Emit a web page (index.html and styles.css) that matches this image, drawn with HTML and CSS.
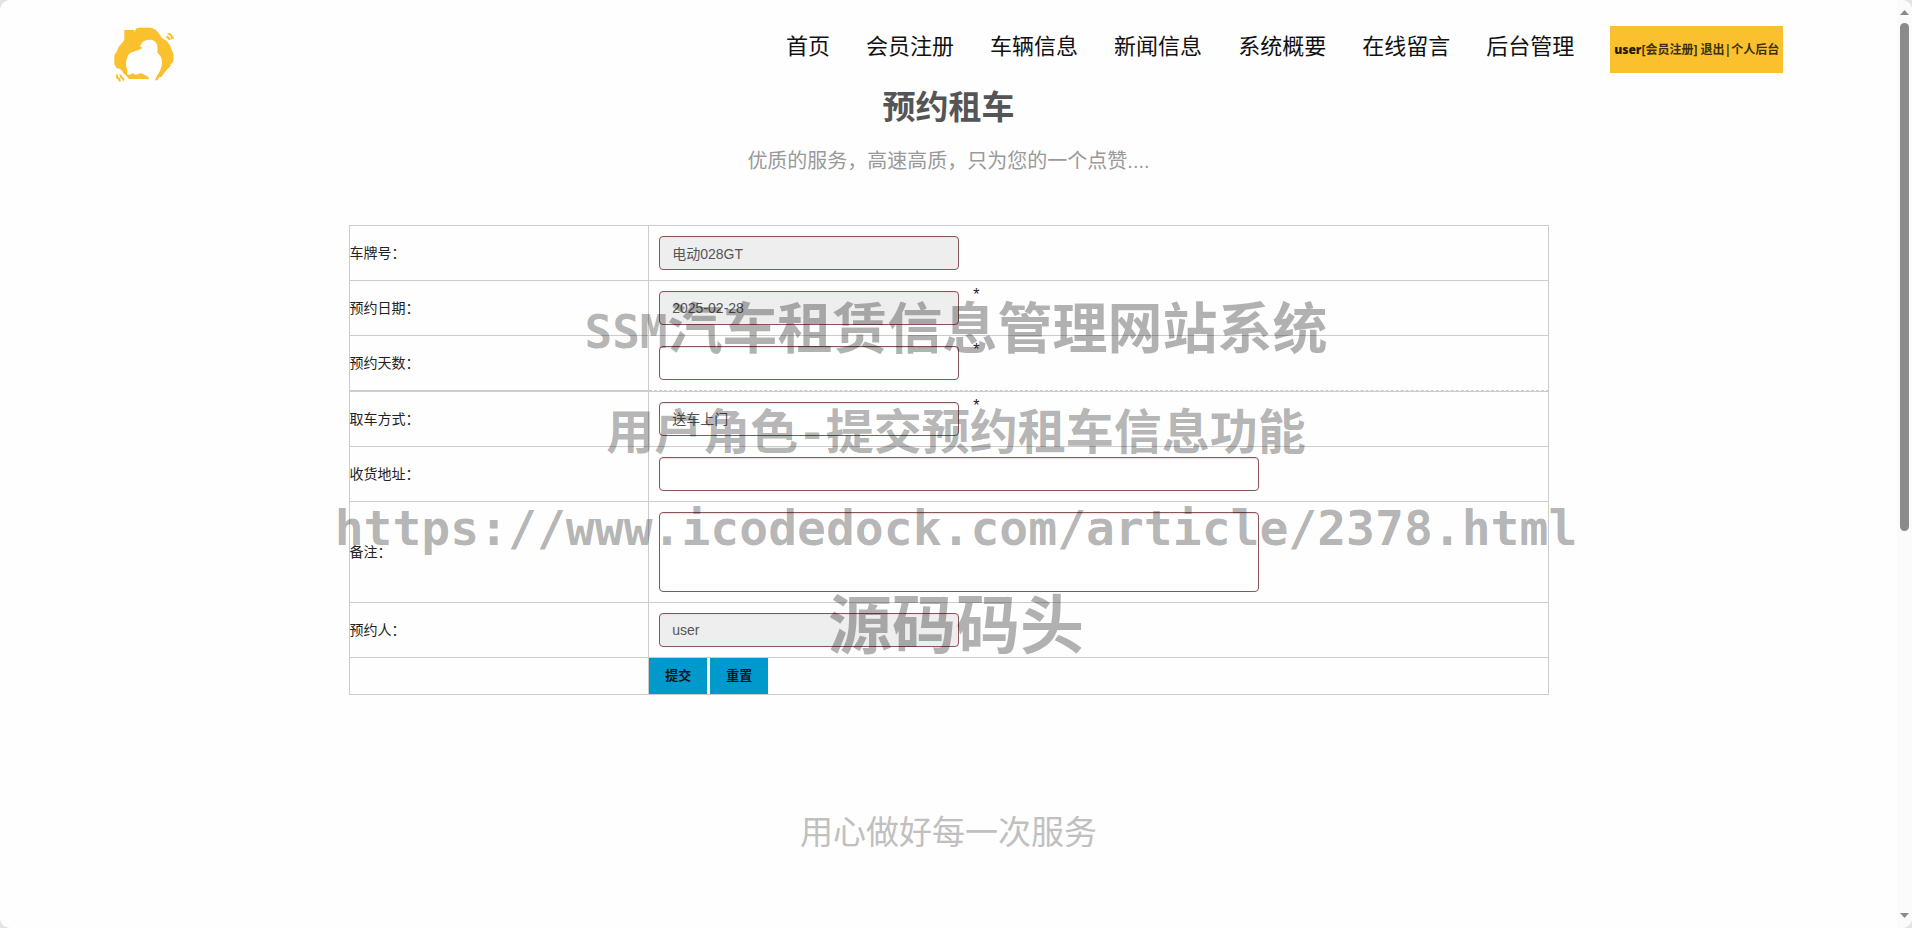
FILE: index.html
```html
<!DOCTYPE html>
<html lang="zh-CN">
<head>
<meta charset="utf-8">
<title>预约租车</title>
<link rel="stylesheet" href="styles.css">
</head>
<body>
<div class="window">
  <div class="page">
    <header class="header">
      <a class="logo" href="#" aria-label="首页">
        <svg width="60" height="56" viewBox="71 51 180 168" fill="#fbc02d">
          <path d="M102 60h30v6l7-11q10-3 21-2 16-1 27 2 10 3 18 15l10 14 15 10q10 10 13 23l6 14v23l-8 9-9 6q-3 9-11 13l-10 14-10 15h-8l7-14q11-14 14-29 3-19-4-31l-9-9q2-15-1-25-6-14-21-14-17 0-24 9-3 8-7 11l7 3-2 4q-9 5-24 9-17 5-18 17l-4 13q-1 14 5 30l-2 7q4 4 12 1l6-4q4 7 14 4 12-7 22 3 10 2 13 11h-61l-11-12q-8-6-10-13-5-7-16-7l-7-12v-27l6-9q5-17 17-28 7-6 7-12z"/>
          <path d="M200 201l9-14q11-14 12-30l22 9-17 17-13 18z"/>
          <g fill="none" stroke="#fbc02d" stroke-width="6">
            <path d="M232 71q12 1 13 13l5-1M228 80q9 2 10 10M80 194q-2 10 6 12l3 8M90 194q1 8 8 12l2 6"/>
          </g>
        </svg>
      </a>
      <nav class="nav">
        <a href="#">首页</a>
        <a href="#">会员注册</a>
        <a href="#">车辆信息</a>
        <a href="#">新闻信息</a>
        <a href="#">系统概要</a>
        <a href="#">在线留言</a>
        <a href="#">后台管理</a>
        <div class="account"><b>user</b>[会员注册] <a href="#">退出</a>|<a href="#">个人后台</a></div>
      </nav>
    </header>

    <main class="main">
      <h1 class="title">预约租车</h1>
      <p class="subtitle">优质的服务，高速高质，只为您的一个点赞....</p>

      <form class="booking">
        <table class="grid">
          <tr>
            <td><label for="plate">车牌号：</label></td>
            <td><div class="field"><input class="control" id="plate" type="text" value="电动028GT" readonly></div></td>
          </tr>
          <tr>
            <td><label for="date">预约日期：</label></td>
            <td><div class="field"><input class="control" id="date" type="text" value="2025-02-28" readonly><span class="required">*</span></div></td>
          </tr>
          <tr class="dashed">
            <td><label for="days">预约天数：</label></td>
            <td><div class="field"><input class="control" id="days" type="text"><span class="required">*</span></div></td>
          </tr>
          <tr class="ruled">
            <td><label for="pickup">取车方式：</label></td>
            <td><div class="field"><select class="control" id="pickup"><option>送车上门</option></select><span class="required">*</span></div></td>
          </tr>
          <tr>
            <td><label for="address">收货地址：</label></td>
            <td><div class="field"><input class="control wide" id="address" type="text"></div></td>
          </tr>
          <tr>
            <td><label for="remark">备注：</label></td>
            <td><div class="field"><textarea class="control wide tall" id="remark"></textarea></div></td>
          </tr>
          <tr>
            <td><label for="booker">预约人：</label></td>
            <td><div class="field"><input class="control" id="booker" type="text" value="user" readonly></div></td>
          </tr>
          <tr>
            <td></td>
            <td class="actions"><div class="buttons"><button class="button" type="submit">提交</button><button class="button" type="reset">重置</button></div></td>
          </tr>
        </table>
      </form>
    </main>

    <footer class="slogan">用心做好每一次服务</footer>
  </div>

  <div class="scrollbar" aria-hidden="true">
    <svg width="9" height="5" viewBox="0 0 9 5"><path d="M4.500 0L9 5H0z"/></svg>
    <div class="thumb"></div>
    <svg width="9" height="5" viewBox="0 0 9 5"><path d="M0 0h9L4.500 5z"/></svg>
  </div>

  <div class="watermark">
    <div class="mark first"><span>SSM</span>汽车租赁信息管理网站系统</div>
    <div class="mark">用户角色<span>-</span>提交预约租车信息功能</div>
    <div class="mark url">https://www.icodedock.com/article/2378.html</div>
    <div class="mark last">源码码头</div>
  </div>
</div>
</body>
</html>
```

FILE: styles.css
```css
* { box-sizing: border-box; }

body {
  margin: 0;
  background: #e4e4e4;
  color: #222;
  font: 14px/20px "Liberation Sans", "Noto Sans CJK SC", sans-serif;
}

a { color: inherit; text-decoration: none; }

.window {
  position: relative;
  display: flex;
  height: 100vh;
  overflow: hidden;
  border-radius: 10px;
  background: #fefefe;
}

.page { flex: 1; }

.header {
  display: flex;
  justify-content: space-between;
  padding: 26px 6% 0;
}

.logo svg { display: block; margin-top: 1px; }

.nav {
  display: flex;
  align-items: flex-start;
  gap: 36px;
  color: #111;
  font-size: 22px;
  line-height: 42px;
}

.account {
  padding: 1px 4px 0;
  background: #fbc02d;
  color: #3a3013;
  font: bold 12px/46px "Open Sans", "Noto Sans CJK SC", sans-serif;
  white-space: nowrap;
}

.account b { color: #221c0b; }

.main { text-align: center; }

.title {
  margin: 0;
  color: #555;
  font-size: 33px;
  line-height: 50px;
}

.subtitle {
  margin: 14px 0 50px;
  color: #999;
  font-size: 20px;
  line-height: 28px;
}

.booking {
  width: 1200px;
  max-width: 100%;
  margin: 0 auto;
}

.grid {
  width: 100%;
  border: solid #ccc;
  border-width: 1px 0 0 1px;
  border-spacing: 0;
  text-align: left;
}

.grid td {
  padding: 10px;
  border: solid #ccc;
  border-width: 0 1px 1px 0;
}

.grid td:first-child { width: 25%; padding-left: 0; }
.grid .dashed td:last-child { border-bottom-style: dashed; }
.grid .ruled td { border-top-width: 1px; }
.grid .actions { padding: 0; }

.field { display: flex; align-items: flex-start; gap: 14px; }

.control {
  display: block;
  width: 300px;
  height: 34px;
  margin: 0;
  padding: 6px 12px;
  border: 1px solid #8a5558;
  border-radius: 4px;
  background: #fff;
  box-shadow: inset 0 1px 1px #f0dede;
  color: #555;
  font: inherit;
  appearance: none;
  resize: none;
}

.control[readonly] { background: #eee; }
.wide { width: 600px; }
.tall { height: 80px; }

.required { font-size: 16px; line-height: 8px; }

.buttons { display: flex; gap: 3px; }

.button {
  height: 36px;
  padding: 0 16px;
  border: 0;
  background: #09c;
  color: #111;
  font: bold 13px/36px "Liberation Sans", "Noto Sans CJK SC", sans-serif;
}

.slogan {
  margin-top: 114px;
  color: #c0c0c0;
  font-size: 33px;
  line-height: 48px;
  text-align: center;
}

.scrollbar {
  display: flex;
  flex-direction: column;
  align-items: center;
  width: 15px;
  padding: 10px 0 10px;
  background: #fbfbfb;
  fill: #8b8b8b;
}

.thumb {
  width: 9px;
  height: 56%;
  margin: 8px 0 auto;
  border-radius: 5px;
  background: #8b8b8b;
}

.watermark {
  position: absolute;
  top: 284px;
  left: 0;
  right: 0;
  color: rgba(0, 0, 0, 0.3);
  font-weight: bold;
  text-align: center;
  pointer-events: none;
}

.mark {
  height: 80px;
  font-family: "Noto Sans CJK SC", sans-serif;
  font-size: 48px;
  line-height: 80px;
  margin-bottom: 20px;
  white-space: nowrap;
}

.mark span, .url { font-family: "DejaVu Sans Mono", monospace; }
.mark span { font-size: 46px; line-height: 1; }
.url { margin-bottom: 12px; }
.first { font-size: 55px; margin-bottom: 24px; }
.last { font-size: 64px; }
```
